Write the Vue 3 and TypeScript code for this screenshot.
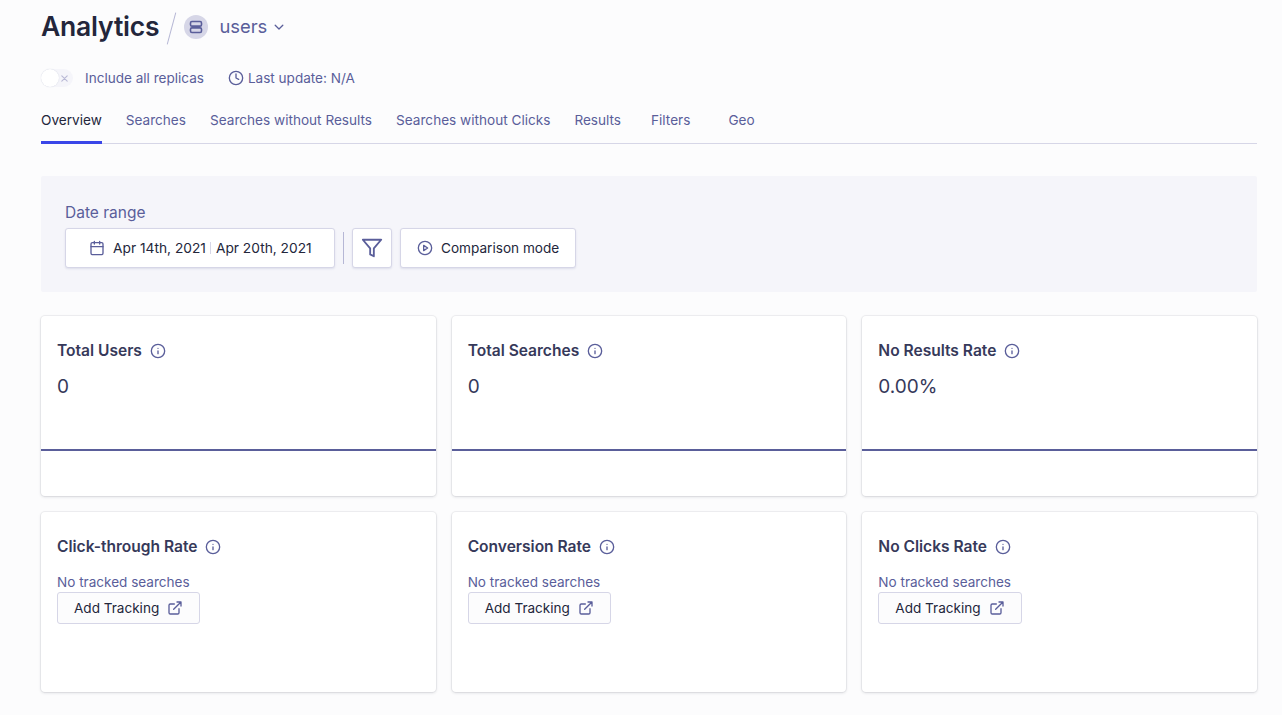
<script setup lang="ts">
const tabs = ['Overview', 'Searches', 'Searches without Results', 'Searches without Clicks', 'Results', 'Filters', 'Geo']
const stats = [
  { title: 'Total Users', value: '0' },
  { title: 'Total Searches', value: '0' },
  { title: 'No Results Rate', value: '0.00%' },
]
const tracked = ['Click-through Rate', 'Conversion Rate', 'No Clicks Rate']
</script>

<template>
  <div class="page">
    <header class="head">
      <h1>Analytics</h1>
      <span class="slash"></span>
      <span class="avatar">
        <svg width="14" height="14" viewBox="0 0 14 14" fill="none" stroke="#5a5e9a" stroke-width="1.6">
          <rect x="1.5" y="1.5" width="11" height="4.6" rx="1.4" />
          <rect x="1.5" y="7.9" width="11" height="4.6" rx="1.4" />
        </svg>
      </span>
      <span class="index">users</span>
      <svg class="chev" width="12" height="12" viewBox="0 0 12 12" fill="none" stroke="#5a5e9a" stroke-width="1.3" stroke-linecap="round" stroke-linejoin="round"><path d="M2.2 4.2 6 8l3.8-3.8" /></svg>
    </header>

    <div class="meta">
      <span class="toggle">
        <span class="knob"></span>
        <svg width="7" height="7" viewBox="0 0 7 7" stroke="#b9b9d6" stroke-width="1.1" stroke-linecap="round"><path d="M.8.8l5.4 5.4M6.2.8.8 6.2" /></svg>
      </span>
      <span class="replicas">Include all replicas</span>
      <svg class="clock" width="16" height="16" viewBox="0 0 24 24" fill="none" stroke="#5a5e9a" stroke-width="2" stroke-linecap="round" stroke-linejoin="round"><circle cx="12" cy="12" r="10" /><path d="M12 6v6l4 2" /></svg>
      <span>Last update: N/A</span>
    </div>

    <nav class="tabs">
      <a v-for="(t, i) in tabs" :key="t" class="tab" :class="{ active: i === 0, wide: t === 'Filters' }">{{ t }}</a>
    </nav>

    <section class="range">
      <div class="range-label">Date range</div>
      <div class="range-row">
        <button class="btn date">
          <svg width="16" height="16" viewBox="0 0 24 24" fill="none" stroke="#5a5e9a" stroke-width="2" stroke-linecap="round" stroke-linejoin="round"><rect x="3" y="4" width="18" height="18" rx="2" /><path d="M16 2v4M8 2v4M3 10h18" /></svg>
          <span class="d1">Apr 14th, 2021</span><span class="sep"></span><span>Apr 20th, 2021</span>
        </button>
        <span class="vline"></span>
        <button class="btn square">
          <svg width="22" height="22" viewBox="0 0 24 24" fill="none" stroke="#5a5e9a" stroke-width="2" stroke-linejoin="round"><path d="M22 3H2l8 9.46V19l4 2v-8.54L22 3z" /></svg>
        </button>
        <button class="btn compare">
          <svg width="16" height="16" viewBox="0 0 24 24" fill="none" stroke="#5a5e9a" stroke-width="2" stroke-linecap="round" stroke-linejoin="round"><circle cx="12" cy="12" r="10" /><path d="m10 8 6 4-6 4V8z" /></svg>
          <span>Comparison mode</span>
        </button>
      </div>
    </section>

    <section class="grid">
      <article v-for="s in stats" :key="s.title" class="card">
        <div class="body">
          <h2>{{ s.title }}
            <svg width="16" height="16" viewBox="0 0 24 24" fill="none" stroke="#5a5e9a" stroke-width="2" stroke-linecap="round"><circle cx="12" cy="12" r="10" /><path d="M12 16v-4M12 8h.01" /></svg>
          </h2>
          <div class="value">{{ s.value }}</div>
        </div>
        <div class="chart"></div>
      </article>
      <article v-for="t in tracked" :key="t" class="card">
        <div class="body">
          <h2>{{ t }}
            <svg width="16" height="16" viewBox="0 0 24 24" fill="none" stroke="#5a5e9a" stroke-width="2" stroke-linecap="round"><circle cx="12" cy="12" r="10" /><path d="M12 16v-4M12 8h.01" /></svg>
          </h2>
          <div class="none">No tracked searches</div>
          <button class="btn track">
            <span>Add Tracking</span>
            <svg width="16" height="16" viewBox="0 0 24 24" fill="none" stroke="#5a5e9a" stroke-width="2" stroke-linecap="round" stroke-linejoin="round"><path d="M18 13v6a2 2 0 0 1-2 2H5a2 2 0 0 1-2-2V8a2 2 0 0 1 2-2h6" /><path d="M15 3h6v6M10 14 21 3" /></svg>
          </button>
        </div>
      </article>
    </section>
  </div>
</template>

<style>
html, body { margin: 0; background: #fcfcfd; }
</style>

<style scoped>
.page {
  box-sizing: border-box;
  width: 1282px;
  height: 715px;
  overflow: hidden;
  padding: 0 25px 0 41px;
  font-family: Inter, "Liberation Sans", sans-serif;
  font-size: 13.55px;
  color: #5a5e9a;
  background: #fcfcfd;
}
.head { display: flex; align-items: center; height: 54px; }
h1 { margin: -2px 0 0; font-size: 26.5px; font-weight: 600; color: #23263b; letter-spacing: -0.2px; }
.slash { width: 1px; height: 33px; background: #b6b7d5; transform: rotate(15deg); margin: 2px 0 0 12px; }
.avatar { width: 24px; height: 24px; border-radius: 50%; background: #d6d6e7; display: flex; align-items: center; justify-content: center; margin-left: 12px; }
.index { font-size: 18.4px; margin: -2px 0 0 11px; }
.chev { margin-left: 6px; margin-top: 0; }
.meta { display: flex; align-items: center; height: 20px; margin-top: 14px; margin-bottom: -1px; }
.toggle { box-sizing: border-box; width: 32px; height: 18px; border-radius: 9px; background: #f5f5fa; position: relative; display: flex; align-items: center; justify-content: flex-end; padding-right: 5px; }
.knob { position: absolute; left: 0; top: 0; width: 18px; height: 18px; border-radius: 50%; background: #fff; box-shadow: 0 0 1px #c4c8d8; }
.replicas { margin-left: 12px; }
.clock { margin-left: 24px; margin-right: 4px; }
.tabs { display: flex; gap: 24px; height: 45px; margin-top: 11px; border-bottom: 1px solid #d6d6e7; box-sizing: content-box; font-size: 13.6px; }
.tab { box-sizing: border-box; height: 46px; padding-top: 12px; line-height: 20px; margin-bottom: -1px; }
.tab.active { color: #23263b; border-bottom: 3px solid #3a46e8; }
.tab.wide { margin-left: 6px; margin-right: 14px; }
.range { box-sizing: border-box; margin-top: 32px; height: 116px; padding: 25px 24px 24px; background: #f5f5fa; border-radius: 2px; }
.range-label { font-size: 15.5px; line-height: 24px; }
.range-row { display: flex; align-items: center; margin-top: 3px; }
.btn { display: inline-flex; align-items: center; box-sizing: border-box; height: 40px; background: #fff; border: 1px solid #d6d6e7; border-radius: 3px; box-shadow: 0 1px 2px rgba(90, 94, 154, 0.15); font: inherit; color: #23263b; padding: 0; }
.date { width: 270px; padding-left: 23px; gap: 8px; font-size: 13.75px; }
.d1 { margin-left: 0; }
.sep { width: 1px; height: 12px; background: #d6d6e7; margin: 0 -3.5px; }
.vline { width: 1px; height: 32px; background: #b6b7d5; margin: 0 8px; }
.square { width: 40px; justify-content: center; }
.compare { width: 176px; margin-left: 8px; padding-left: 16px; gap: 8px; font-size: 13.6px; }
.grid { display: grid; grid-template-columns: repeat(3, 1fr); grid-auto-rows: 180px; gap: 16px; margin-top: 24px; }
.card { background: #fff; border-radius: 4px; box-shadow: 0 0 0 1px rgba(35, 38, 59, 0.05), 0 1px 3px rgba(35, 38, 59, 0.15); display: flex; flex-direction: column; position: relative; }
.body { padding: 25px 16px 0; }
h2 { display: flex; align-items: center; gap: 8px; margin: 0; font-size: 15.55px; font-weight: 600; line-height: 20px; color: #36395a; }
.value { font-size: 19px; line-height: 24px; margin-top: 14px; color: #36395a; }
.chart { position: absolute; left: 0; right: 0; top: 133px; height: 2px; background: #5a5e9a; }
.none { margin-top: 17px; line-height: 16px; }
.track { height: 32px; padding: 0 16px; gap: 8px; margin-top: 2px; background: #fcfcfd; box-shadow: none; }
</style>
